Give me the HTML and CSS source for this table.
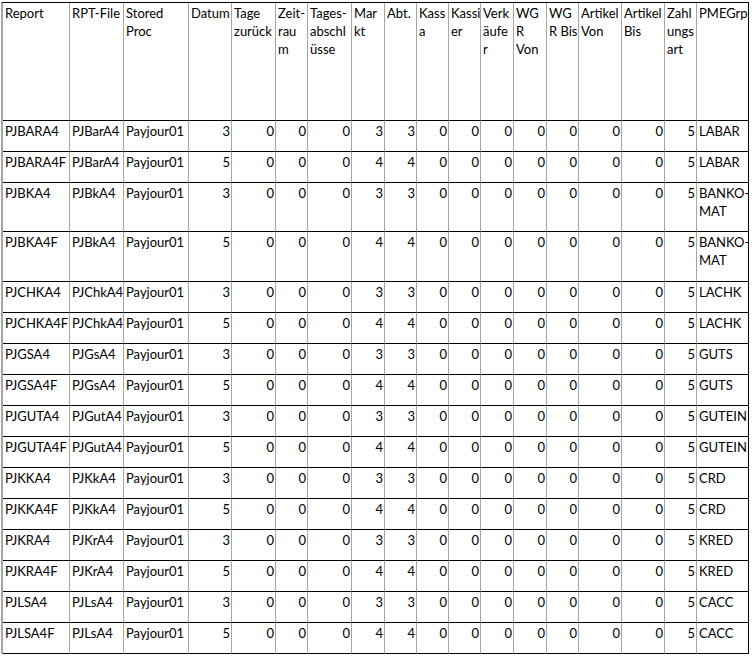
FILE: index.html
```html
<!DOCTYPE html>
<html>
<head>
<meta charset="utf-8">
<link rel="stylesheet" href="styles.css">
</head>
<body>
<table class="grid">
<colgroup>
<col class="w67"><col class="w54"><col class="w65"><col class="w43"><col class="w44"><col class="w32"><col class="w44"><col class="w33"><col class="w32"><col class="w32"><col class="w32"><col class="w33"><col class="w33"><col class="w32"><col class="w43"><col class="w43"><col class="w32"><col class="w52">
</colgroup>
<thead>
<tr class="head">
<th>Report</th><th>RPT-File</th><th>Stored<br>Proc</th><th>Datum</th><th>Tage<br>zurück</th><th>Zeit-<br>rau<br>m</th><th>Tages-<br>abschl<br>üsse</th><th>Mar<br>kt</th><th>Abt.</th><th>Kass<br>a</th><th>Kassi<br>er</th><th>Verk<br>äufe<br>r</th><th>WG<br>R<br>Von</th><th>WG<br>R Bis</th><th>Artikel<br>Von</th><th>Artikel<br>Bis</th><th>Zahl<br>ungs<br>art</th><th>PMEGrp</th>
</tr>
</thead>
<tbody>
<tr class="r1"><td>PJBARA4</td><td>PJBarA4</td><td>Payjour01</td><td class="n">3</td><td class="n">0</td><td class="n">0</td><td class="n">0</td><td class="n">3</td><td class="n">3</td><td class="n">0</td><td class="n">0</td><td class="n">0</td><td class="n">0</td><td class="n">0</td><td class="n">0</td><td class="n">0</td><td class="n">5</td><td>LABAR</td></tr>
<tr class="r1"><td>PJBARA4F</td><td>PJBarA4</td><td>Payjour01</td><td class="n">5</td><td class="n">0</td><td class="n">0</td><td class="n">0</td><td class="n">4</td><td class="n">4</td><td class="n">0</td><td class="n">0</td><td class="n">0</td><td class="n">0</td><td class="n">0</td><td class="n">0</td><td class="n">0</td><td class="n">5</td><td>LABAR</td></tr>
<tr class="r2a"><td>PJBKA4</td><td>PJBkA4</td><td>Payjour01</td><td class="n">3</td><td class="n">0</td><td class="n">0</td><td class="n">0</td><td class="n">3</td><td class="n">3</td><td class="n">0</td><td class="n">0</td><td class="n">0</td><td class="n">0</td><td class="n">0</td><td class="n">0</td><td class="n">0</td><td class="n">5</td><td>BANKO-<br>MAT</td></tr>
<tr class="r2b"><td>PJBKA4F</td><td>PJBkA4</td><td>Payjour01</td><td class="n">5</td><td class="n">0</td><td class="n">0</td><td class="n">0</td><td class="n">4</td><td class="n">4</td><td class="n">0</td><td class="n">0</td><td class="n">0</td><td class="n">0</td><td class="n">0</td><td class="n">0</td><td class="n">0</td><td class="n">5</td><td>BANKO-<br>MAT</td></tr>
<tr class="r1"><td>PJCHKA4</td><td>PJChkA4</td><td>Payjour01</td><td class="n">3</td><td class="n">0</td><td class="n">0</td><td class="n">0</td><td class="n">3</td><td class="n">3</td><td class="n">0</td><td class="n">0</td><td class="n">0</td><td class="n">0</td><td class="n">0</td><td class="n">0</td><td class="n">0</td><td class="n">5</td><td>LACHK</td></tr>
<tr class="r1"><td>PJCHKA4F</td><td>PJChkA4</td><td>Payjour01</td><td class="n">5</td><td class="n">0</td><td class="n">0</td><td class="n">0</td><td class="n">4</td><td class="n">4</td><td class="n">0</td><td class="n">0</td><td class="n">0</td><td class="n">0</td><td class="n">0</td><td class="n">0</td><td class="n">0</td><td class="n">5</td><td>LACHK</td></tr>
<tr class="r1"><td>PJGSA4</td><td>PJGsA4</td><td>Payjour01</td><td class="n">3</td><td class="n">0</td><td class="n">0</td><td class="n">0</td><td class="n">3</td><td class="n">3</td><td class="n">0</td><td class="n">0</td><td class="n">0</td><td class="n">0</td><td class="n">0</td><td class="n">0</td><td class="n">0</td><td class="n">5</td><td>GUTS</td></tr>
<tr class="r1"><td>PJGSA4F</td><td>PJGsA4</td><td>Payjour01</td><td class="n">5</td><td class="n">0</td><td class="n">0</td><td class="n">0</td><td class="n">4</td><td class="n">4</td><td class="n">0</td><td class="n">0</td><td class="n">0</td><td class="n">0</td><td class="n">0</td><td class="n">0</td><td class="n">0</td><td class="n">5</td><td>GUTS</td></tr>
<tr class="r1"><td>PJGUTA4</td><td>PJGutA4</td><td>Payjour01</td><td class="n">3</td><td class="n">0</td><td class="n">0</td><td class="n">0</td><td class="n">3</td><td class="n">3</td><td class="n">0</td><td class="n">0</td><td class="n">0</td><td class="n">0</td><td class="n">0</td><td class="n">0</td><td class="n">0</td><td class="n">5</td><td>GUTEIN</td></tr>
<tr class="r1"><td>PJGUTA4F</td><td>PJGutA4</td><td>Payjour01</td><td class="n">5</td><td class="n">0</td><td class="n">0</td><td class="n">0</td><td class="n">4</td><td class="n">4</td><td class="n">0</td><td class="n">0</td><td class="n">0</td><td class="n">0</td><td class="n">0</td><td class="n">0</td><td class="n">0</td><td class="n">5</td><td>GUTEIN</td></tr>
<tr class="r1"><td>PJKKA4</td><td>PJKkA4</td><td>Payjour01</td><td class="n">3</td><td class="n">0</td><td class="n">0</td><td class="n">0</td><td class="n">3</td><td class="n">3</td><td class="n">0</td><td class="n">0</td><td class="n">0</td><td class="n">0</td><td class="n">0</td><td class="n">0</td><td class="n">0</td><td class="n">5</td><td>CRD</td></tr>
<tr class="r1"><td>PJKKA4F</td><td>PJKkA4</td><td>Payjour01</td><td class="n">5</td><td class="n">0</td><td class="n">0</td><td class="n">0</td><td class="n">4</td><td class="n">4</td><td class="n">0</td><td class="n">0</td><td class="n">0</td><td class="n">0</td><td class="n">0</td><td class="n">0</td><td class="n">0</td><td class="n">5</td><td>CRD</td></tr>
<tr class="r1"><td>PJKRA4</td><td>PJKrA4</td><td>Payjour01</td><td class="n">3</td><td class="n">0</td><td class="n">0</td><td class="n">0</td><td class="n">3</td><td class="n">3</td><td class="n">0</td><td class="n">0</td><td class="n">0</td><td class="n">0</td><td class="n">0</td><td class="n">0</td><td class="n">0</td><td class="n">5</td><td>KRED</td></tr>
<tr class="r1"><td>PJKRA4F</td><td>PJKrA4</td><td>Payjour01</td><td class="n">5</td><td class="n">0</td><td class="n">0</td><td class="n">0</td><td class="n">4</td><td class="n">4</td><td class="n">0</td><td class="n">0</td><td class="n">0</td><td class="n">0</td><td class="n">0</td><td class="n">0</td><td class="n">0</td><td class="n">5</td><td>KRED</td></tr>
<tr class="r1"><td>PJLSA4</td><td>PJLsA4</td><td>Payjour01</td><td class="n">3</td><td class="n">0</td><td class="n">0</td><td class="n">0</td><td class="n">3</td><td class="n">3</td><td class="n">0</td><td class="n">0</td><td class="n">0</td><td class="n">0</td><td class="n">0</td><td class="n">0</td><td class="n">0</td><td class="n">5</td><td>CACC</td></tr>
<tr class="r1 last"><td>PJLSA4F</td><td>PJLsA4</td><td>Payjour01</td><td class="n">5</td><td class="n">0</td><td class="n">0</td><td class="n">0</td><td class="n">4</td><td class="n">4</td><td class="n">0</td><td class="n">0</td><td class="n">0</td><td class="n">0</td><td class="n">0</td><td class="n">0</td><td class="n">0</td><td class="n">5</td><td>CACC</td></tr>
</tbody>
</table>
</body>
</html>
```
FILE: styles.css
```css
html, body {
  margin: 0;
  padding: 0;
  background: #ffffff;
}

body {
  padding: 2px 0 0 1px;
  font-family: Lato, "Liberation Sans", Arial, sans-serif;
  font-size: 13px;
  color: #000000;
}

.grid {
  table-layout: fixed;
  border-collapse: separate;
  border-spacing: 0;
  width: 748px;
  border-top: 1px solid #000000;
  border-left: 2px solid #a6a6a6;
}

.w67 { width: 67px; }
.w54 { width: 54px; }
.w65 { width: 65px; }
.w43 { width: 43px; }
.w44 { width: 44px; }
.w32 { width: 32px; }
.w33 { width: 33px; }
.w52 { width: 52px; }

.grid th,
.grid td {
  box-sizing: border-box;
  padding: 1px 1px 0 2px;
  vertical-align: top;
  text-align: left;
  font-weight: normal;
  line-height: 18px;
  border-right: 1px solid #a6a6a6;
  border-bottom: 1px solid #000000;
  white-space: nowrap;
  overflow: hidden;
}

.grid th:last-child,
.grid td:last-child {
  border-right: 1px solid #000000;
}

.grid td.n {
  text-align: right;
  padding-right: 1px;
}

.head { height: 118px; }
.r1 { height: 31px; }
.r2a { height: 49px; }
.r2b { height: 50px; }
```
